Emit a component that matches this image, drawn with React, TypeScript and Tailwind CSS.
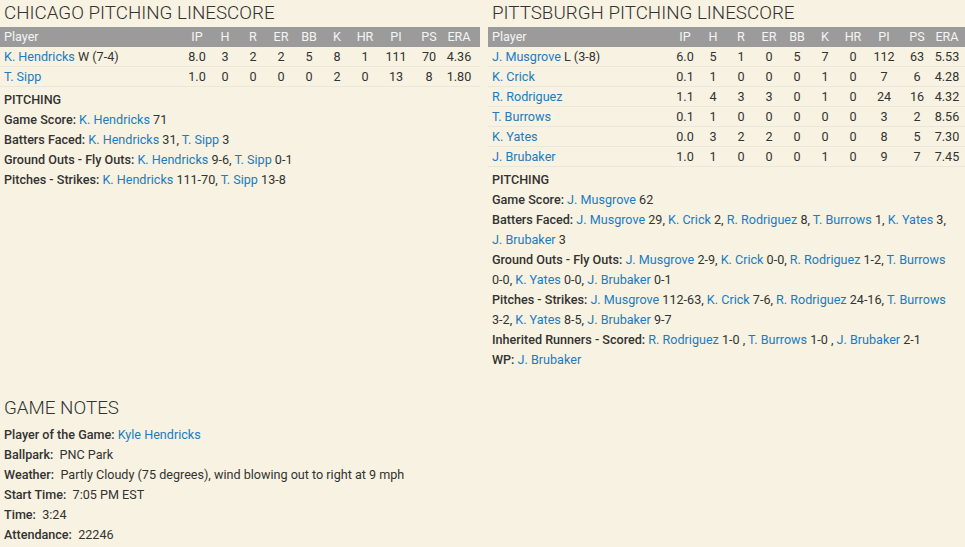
import React from 'react'

type Pitcher = {
  name: string
  dec?: string
  ip: string
  h: number
  r: number
  er: number
  bb: number
  k: number
  hr: number
  pi: number
  ps: number
  era: string
}

type Part = string | { link: string }

const cubs: Pitcher[] = [
  { name: 'K. Hendricks', dec: 'W (7-4)', ip: '8.0', h: 3, r: 2, er: 2, bb: 5, k: 8, hr: 1, pi: 111, ps: 70, era: '4.36' },
  { name: 'T. Sipp', ip: '1.0', h: 0, r: 0, er: 0, bb: 0, k: 2, hr: 0, pi: 13, ps: 8, era: '1.80' },
]

const pirates: Pitcher[] = [
  { name: 'J. Musgrove', dec: 'L (3-8)', ip: '6.0', h: 5, r: 1, er: 0, bb: 5, k: 7, hr: 0, pi: 112, ps: 63, era: '5.53' },
  { name: 'K. Crick', ip: '0.1', h: 1, r: 0, er: 0, bb: 0, k: 1, hr: 0, pi: 7, ps: 6, era: '4.28' },
  { name: 'R. Rodriguez', ip: '1.1', h: 4, r: 3, er: 3, bb: 0, k: 1, hr: 0, pi: 24, ps: 16, era: '4.32' },
  { name: 'T. Burrows', ip: '0.1', h: 1, r: 0, er: 0, bb: 0, k: 0, hr: 0, pi: 3, ps: 2, era: '8.56' },
  { name: 'K. Yates', ip: '0.0', h: 3, r: 2, er: 2, bb: 0, k: 0, hr: 0, pi: 8, ps: 5, era: '7.30' },
  { name: 'J. Brubaker', ip: '1.0', h: 1, r: 0, er: 0, bb: 0, k: 1, hr: 0, pi: 9, ps: 7, era: '7.45' },
]

const cubsNotes: [string, Part[]][] = [
  ['Game Score:', [{ link: 'K. Hendricks' }, ' 71']],
  ['Batters Faced:', [{ link: 'K. Hendricks' }, ' 31, ', { link: 'T. Sipp' }, ' 3']],
  ['Ground Outs - Fly Outs:', [{ link: 'K. Hendricks' }, ' 9-6, ', { link: 'T. Sipp' }, ' 0-1']],
  ['Pitches - Strikes:', [{ link: 'K. Hendricks' }, ' 111-70, ', { link: 'T. Sipp' }, ' 13-8']],
]

const piratesNotes: [string, Part[]][] = [
  ['Game Score:', [{ link: 'J. Musgrove' }, ' 62']],
  [
    'Batters Faced:',
    [
      { link: 'J. Musgrove' }, ' 29, ', { link: 'K. Crick' }, ' 2, ', { link: 'R. Rodriguez' }, ' 8, ',
      { link: 'T. Burrows' }, ' 1, ', { link: 'K. Yates' }, ' 3, ', { link: 'J. Brubaker' }, ' 3',
    ],
  ],
  [
    'Ground Outs - Fly Outs:',
    [
      { link: 'J. Musgrove' }, ' 2-9, ', { link: 'K. Crick' }, ' 0-0, ', { link: 'R. Rodriguez' }, ' 1-2, ',
      { link: 'T. Burrows' }, ' 0-0, ', { link: 'K. Yates' }, ' 0-0, ', { link: 'J. Brubaker' }, ' 0-1',
    ],
  ],
  [
    'Pitches - Strikes:',
    [
      { link: 'J. Musgrove' }, ' 112-63, ', { link: 'K. Crick' }, ' 7-6, ', { link: 'R. Rodriguez' }, ' 24-16, ',
      { link: 'T. Burrows' }, ' 3-2, ', { link: 'K. Yates' }, ' 8-5, ', { link: 'J. Brubaker' }, ' 9-7',
    ],
  ],
  [
    'Inherited Runners - Scored:',
    [{ link: 'R. Rodriguez' }, ' 1-0 , ', { link: 'T. Burrows' }, ' 1-0 , ', { link: 'J. Brubaker' }, ' 2-1'],
  ],
  ['WP:', [{ link: 'J. Brubaker' }]],
]

const cols = ['IP', 'H', 'R', 'ER', 'BB', 'K', 'HR', 'PI', 'PS', 'ERA']
const grid = 'grid grid-cols-[183px_28px_28px_28px_28px_28px_28px_28px_34px_32px_28px_1fr]'

export default function App() {
  return (
    <div className="min-h-[547px] w-[965px] bg-[#f7f2e1] text-[12.6px] leading-5 text-[#333] font-['Roboto','Liberation_Sans',sans-serif]">
      <div className="flex items-start">
        <section className="w-[480px]">
          <Title>CHICAGO PITCHING LINESCORE</Title>
          <Linescore rows={cubs} />
          <Notes lines={cubsNotes} />
        </section>
        <section className="ml-2 flex-1">
          <Title>PITTSBURGH PITCHING LINESCORE</Title>
          <Linescore rows={pirates} />
          <Notes lines={piratesNotes} />
        </section>
      </div>

      {/* game notes */}
      <section className="mt-[25px]">
        <Title>GAME NOTES</Title>
        <div className="pl-1 pt-[3px]">
          <p>
            <b className="font-medium">Player of the Game:</b> <Link>Kyle Hendricks</Link>
          </p>
          <p><b className="font-medium">Ballpark:</b>&nbsp; PNC Park</p>
          <p><b className="font-medium">Weather:</b>&nbsp; Partly Cloudy (75 degrees), wind blowing out to right at 9 mph</p>
          <p><b className="font-medium">Start Time:</b>&nbsp; 7:05 PM EST</p>
          <p><b className="font-medium">Time:</b>&nbsp; 3:24</p>
          <p><b className="font-medium">Attendance:</b>&nbsp; 22246</p>
        </div>
      </section>
    </div>
  )
}

function Title({ children }: { children: React.ReactNode }) {
  return <h2 className="h-[27px] pl-1 pt-[1px] text-[18.8px] leading-[24px] font-light text-[#333]">{children}</h2>
}

function Link({ children }: { children: React.ReactNode }) {
  return <a className="whitespace-nowrap text-[#1a7cc3]">{children}</a>
}

// keep "0-0," etc. from breaking at the hyphen
function Stat({ text }: { text: string }) {
  const words = text.split(' ')
  return (
    <>
      {words.map((w, i) => (
        <React.Fragment key={i}>
          {i > 0 && ' '}
          {w && <span className="whitespace-nowrap">{w}</span>}
        </React.Fragment>
      ))}
    </>
  )
}

function Linescore({ rows }: { rows: Pitcher[] }) {
  return (
    <div>
      <div className={`${grid} h-5 bg-[#9b9b9b] text-[#f4f4f4] text-center`}>
        <span className="pl-1 text-left">Player</span>
        {cols.map((c) => (
          <span key={c}>{c}</span>
        ))}
        <span />
      </div>
      {rows.map((p) => (
        <div key={p.name} className={`${grid} h-5 border-b border-[#e9e6dc] text-center leading-[19px]`}>
          <span className="pl-1 text-left whitespace-nowrap">
            <Link>{p.name}</Link>
            {p.dec && ` ${p.dec}`}
          </span>
          <span>{p.ip}</span>
          <span>{p.h}</span>
          <span>{p.r}</span>
          <span>{p.er}</span>
          <span>{p.bb}</span>
          <span>{p.k}</span>
          <span>{p.hr}</span>
          <span>{p.pi}</span>
          <span>{p.ps}</span>
          <span>{p.era}</span>
          <span />
        </div>
      ))}
    </div>
  )
}

function Notes({ lines }: { lines: [string, Part[]][] }) {
  return (
    <div className="pl-1 pr-[6px] pt-[3px]">
      <p className="font-medium">PITCHING</p>
      {lines.map(([label, parts]) => (
        <p key={label}>
          <b className="font-medium">{label}</b>{' '}
          {parts.map((part, i) =>
            typeof part === 'string' ? <Stat key={i} text={part} /> : <Link key={i}>{part.link}</Link>,
          )}
        </p>
      ))}
    </div>
  )
}
